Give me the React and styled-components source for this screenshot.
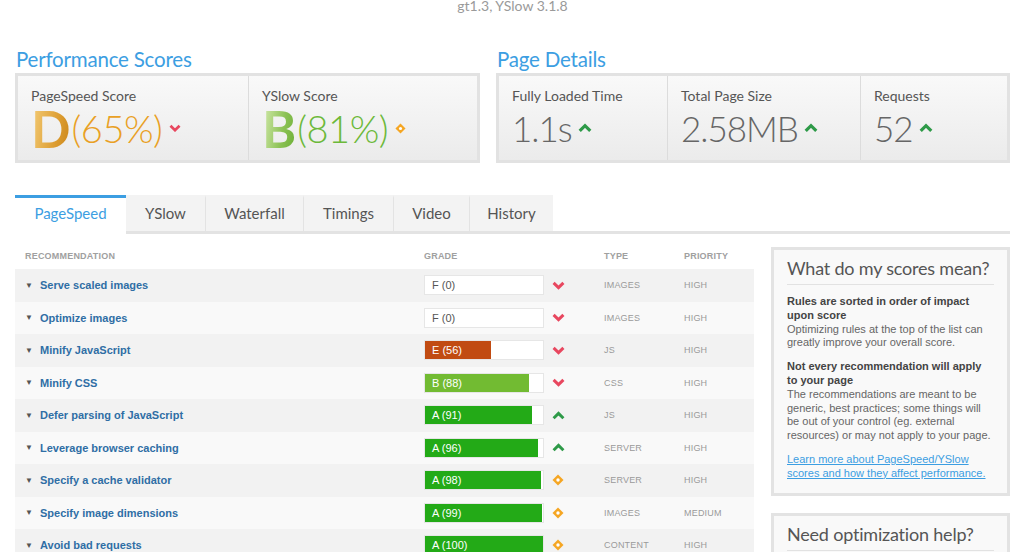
import React from 'react';
import styled, { createGlobalStyle } from 'styled-components';

const GlobalStyle = createGlobalStyle`
  html, body {
    margin: 0;
    padding: 0;
    background: #fff;
    overflow: hidden;
  }
  body {
    font-family: Lato, "Liberation Sans", sans-serif;
  }
`;

const Page = styled.div`
  width: 1024px;
  height: 552px;
  overflow: hidden;
  box-sizing: border-box;
  padding: 0 14px 0 15px;
`;

const Version = styled.div`
  height: 14px;
  text-align: center;
  font-size: 14px;
  line-height: 14px;
  color: #9a9a9a;
  margin-top: -1px;
`;

const Summary = styled.div`
  display: flex;
  gap: 16px;
  margin-top: 32px;
`;

const Section = styled.section`
  width: ${(p) => p.width}px;
`;

const Heading = styled.h2`
  margin: 0 0 0 1px;
  height: 28px;
  font-size: 20.5px;
  font-weight: 400;
  line-height: 28px;
  color: #3c9ee2;
  letter-spacing: -0.2px;
`;

const Panel = styled.div`
  display: flex;
  height: 84px;
  border: 3px solid #e2e2e2;
  background: linear-gradient(#f9f9f9, #ebebeb);
`;

const Cell = styled.div`
  width: ${(p) => p.width}px;
  box-sizing: border-box;
  padding: 12px 0 0 13px;
  border-left: ${(p) => (p.first ? 'none' : '1px solid #dcdcdc')};
`;

const Label = styled.div`
  font-size: 14px;
  line-height: 16px;
  color: #555;
`;

const ScoreLine = styled.div`
  display: flex;
  align-items: center;
  height: 48px;
`;

const Grade = styled.span`
  font-size: 52px;
  font-weight: 700;
  line-height: 48px;
  background: ${(p) => p.gradient};
  -webkit-background-clip: text;
  background-clip: text;
  color: transparent;
`;

const Percent = styled.span`
  font-size: 38px;
  font-weight: 300;
  line-height: 48px;
  color: ${(p) => p.color};
  margin: 0 7px 0 1px;
  letter-spacing: -0.5px;
`;

const Value = styled.span`
  font-size: 35px;
  font-weight: 300;
  line-height: 48px;
  color: #666;
  letter-spacing: -1px;
  margin-right: 6px;
`;

const Tabs = styled.div`
  display: flex;
  margin-top: 32px;
  border-bottom: 3px solid #e3e3e3;
  width: 995px;
`;

const Tab = styled.div`
  box-sizing: border-box;
  width: ${(p) => p.width}px;
  height: ${(p) => (p.active ? 39 : 36)}px;
  margin-bottom: ${(p) => (p.active ? -3 : 0)}px;
  text-align: center;
  font-size: 15px;
  line-height: 30px;
  color: ${(p) => (p.active ? '#3c9ee2' : '#555')};
  background: ${(p) => (p.active ? '#fff' : '#f3f3f3')};
  border-top: 3px solid ${(p) => (p.active ? '#3c9ee2' : '#f3f3f3')};
  border-left: ${(p) => (p.divider ? '1px solid #e3e3e3' : 'none')};
`;

const Content = styled.div`
  display: flex;
  gap: 17px;
  margin-top: 13px;
`;

const Table = styled.div`
  width: 739px;
  font-family: "Liberation Sans", Arial, sans-serif;
`;

const Cols = `
  display: grid;
  grid-template-columns: 409px 120px 60px 80px 1fr;
  align-items: center;
`;

const HeadRow = styled.div`
  ${Cols}
  align-items: start;
  box-sizing: border-box;
  height: 22px;
  padding-top: 4px;
  font-size: 9px;
  font-weight: 700;
  color: #a0a0a0;
  letter-spacing: 0.2px;
`;

const HeadCell = styled.div`
  padding-left: ${(p) => p.pad || 0}px;
`;

const Row = styled.div`
  ${Cols}
  height: 32.5px;
  background: ${(p) => (p.odd ? '#f2f2f2' : '#f9f9f9')};
`;

const Name = styled.div`
  display: flex;
  align-items: center;
  padding-left: 10px;
  font-size: 11px;
  font-weight: 700;
  color: #2f6ea5;
`;

const Caret = styled.span`
  font-size: 8px;
  color: #555;
  width: 15px;
`;

const Bar = styled.div`
  position: relative;
  height: 18px;
  border: 1px solid #e6e6e6;
  background: #fff;
`;

const Fill = styled.div`
  height: 100%;
  background: ${(p) => p.color};
`;

const BarText = styled.span`
  position: absolute;
  left: 7px;
  top: 0;
  font-size: 11px;
  line-height: 18px;
  color: ${(p) => (p.light ? '#fff' : '#555')};
`;

const IconCell = styled.div`
  display: flex;
  padding-left: 8px;
`;

const Meta = styled.div`
  font-size: 9px;
  color: #9a9a9a;
  letter-spacing: 0.2px;
`;

const Sidebar = styled.aside`
  width: 239px;
  display: flex;
  flex-direction: column;
  gap: 17px;
`;

const Box = styled.div`
  border: 3px solid #e3e3e3;
  background: #f9f9f9;
  padding: 5px 13px 12px 13px;
`;

const BoxTitle = styled.div`
  font-size: 18px;
  line-height: 26px;
  color: #555;
  letter-spacing: -0.2px;
  white-space: nowrap;
  padding-bottom: 3px;
  border-bottom: 1px solid #e2e2e2;
  margin-bottom: 10px;
`;

const Para = styled.p`
  margin: 0 0 10px;
  font-family: "Liberation Sans", Arial, sans-serif;
  font-size: 11px;
  line-height: 13.8px;
  color: #666;
  &:last-child {
    margin-bottom: 0;
  }
`;

const Strong = styled.strong`
  display: block;
  color: #444;
`;

const Link = styled.a`
  color: #3c9ee2;
  text-decoration: underline;
`;

const ChevronDown = ({ w = 13 }) => (
  <svg width={w} height={w * 0.7} viewBox="0 0 13 9">
    <polyline points="1.6,1.8 6.5,6.6 11.4,1.8" fill="none" stroke="#e8475f" strokeWidth="3" />
  </svg>
);

const ChevronUp = ({ w = 13 }) => (
  <svg width={w} height={w * 0.7} viewBox="0 0 13 9">
    <polyline points="1.6,7.2 6.5,2.4 11.4,7.2" fill="none" stroke="#2e9a48" strokeWidth="3" />
  </svg>
);

const Diamond = ({ w = 12 }) => (
  <svg width={w} height={w} viewBox="0 0 12 12">
    <polygon points="6,0.5 11.5,6 6,11.5 0.5,6" fill="#f5a623" />
    <circle cx="6" cy="6" r="1.7" fill="#fff" />
  </svg>
);

const trendIcon = (t) =>
  t === 'down' ? <ChevronDown /> : t === 'up' ? <ChevronUp /> : <Diamond />;

const rows = [
  { name: 'Serve scaled images', grade: 'F', score: 0, trend: 'down', type: 'IMAGES', priority: 'HIGH' },
  { name: 'Optimize images', grade: 'F', score: 0, trend: 'down', type: 'IMAGES', priority: 'HIGH' },
  { name: 'Minify JavaScript', grade: 'E', score: 56, trend: 'down', type: 'JS', priority: 'HIGH' },
  { name: 'Minify CSS', grade: 'B', score: 88, trend: 'down', type: 'CSS', priority: 'HIGH' },
  { name: 'Defer parsing of JavaScript', grade: 'A', score: 91, trend: 'up', type: 'JS', priority: 'HIGH' },
  { name: 'Leverage browser caching', grade: 'A', score: 96, trend: 'up', type: 'SERVER', priority: 'HIGH' },
  { name: 'Specify a cache validator', grade: 'A', score: 98, trend: 'same', type: 'SERVER', priority: 'HIGH' },
  { name: 'Specify image dimensions', grade: 'A', score: 99, trend: 'same', type: 'IMAGES', priority: 'MEDIUM' },
  { name: 'Avoid bad requests', grade: 'A', score: 100, trend: 'same', type: 'CONTENT', priority: 'HIGH' },
];

const gradeColors = { A: '#23aa17', B: '#72bb32', E: '#c14b12', F: '#c0392b' };

const tabs = [
  { label: 'PageSpeed', width: 111 },
  { label: 'YSlow', width: 79 },
  { label: 'Waterfall', width: 98 },
  { label: 'Timings', width: 90 },
  { label: 'Video', width: 76 },
  { label: 'History', width: 84 },
];

export default function App() {
  return (
    <Page>
      <GlobalStyle />
      <Version>gt1.3, YSlow 3.1.8</Version>
      <Summary>
        <Section width={465}>
          <Heading>Performance Scores</Heading>
          <Panel>
            <Cell first width={230}>
              <Label>PageSpeed Score</Label>
              <ScoreLine>
                <Grade gradient="linear-gradient(100deg, #f4cd78, #dc9c30 65%, #c98418)">D</Grade>
                <Percent color="#e9a024">(65%)</Percent>
                <ChevronDown w={12} />
              </ScoreLine>
            </Cell>
            <Cell width={229}>
              <Label>YSlow Score</Label>
              <ScoreLine>
                <Grade gradient="linear-gradient(100deg, #d6ebb0, #8cc255 60%, #6aae34)">B</Grade>
                <Percent color="#6cb93a">(81%)</Percent>
                <Diamond w={11} />
              </ScoreLine>
            </Cell>
          </Panel>
        </Section>
        <Section width={514}>
          <Heading>Page Details</Heading>
          <Panel>
            <Cell first width={168}>
              <Label>Fully Loaded Time</Label>
              <ScoreLine>
                <Value>1.1s</Value>
                <ChevronUp w={14} />
              </ScoreLine>
            </Cell>
            <Cell width={193}>
              <Label>Total Page Size</Label>
              <ScoreLine>
                <Value>2.58MB</Value>
                <ChevronUp w={14} />
              </ScoreLine>
            </Cell>
            <Cell width={147}>
              <Label>Requests</Label>
              <ScoreLine>
                <Value>52</Value>
                <ChevronUp w={14} />
              </ScoreLine>
            </Cell>
          </Panel>
        </Section>
      </Summary>

      <Tabs>
        {tabs.map((t, i) => (
          <Tab key={t.label} width={t.width} active={i === 0} divider={i > 1}>
            {t.label}
          </Tab>
        ))}
      </Tabs>

      <Content>
        <Table>
          <HeadRow>
            <HeadCell pad={10}>RECOMMENDATION</HeadCell>
            <HeadCell>GRADE</HeadCell>
            <HeadCell />
            <HeadCell>TYPE</HeadCell>
            <HeadCell>PRIORITY</HeadCell>
          </HeadRow>
          {rows.map((r, i) => (
            <Row key={r.name} odd={i % 2 === 0}>
              <Name>
                <Caret>▼</Caret>
                {r.name}
              </Name>
              <Bar>
                <Fill color={gradeColors[r.grade]} style={{ width: `${r.score}%` }} />
                <BarText light={r.score > 0}>
                  {r.grade} ({r.score})
                </BarText>
              </Bar>
              <IconCell>{trendIcon(r.trend)}</IconCell>
              <Meta>{r.type}</Meta>
              <Meta>{r.priority}</Meta>
            </Row>
          ))}
        </Table>

        <Sidebar>
          <Box>
            <BoxTitle>What do my scores mean?</BoxTitle>
            <Para>
              <Strong>Rules are sorted in order of impact upon score</Strong>
              Optimizing rules at the top of the list can greatly improve your overall score.
            </Para>
            <Para>
              <Strong>Not every recommendation will apply to your page</Strong>
              The recommendations are meant to be generic, best practices; some things will be out of your
              control (eg. external resources) or may not apply to your page.
            </Para>
            <Para>
              <Link href="#">Learn more about PageSpeed/YSlow scores and how they affect performance.</Link>
            </Para>
          </Box>
          <Box>
            <BoxTitle>Need optimization help?</BoxTitle>
          </Box>
        </Sidebar>
      </Content>
    </Page>
  );
}
